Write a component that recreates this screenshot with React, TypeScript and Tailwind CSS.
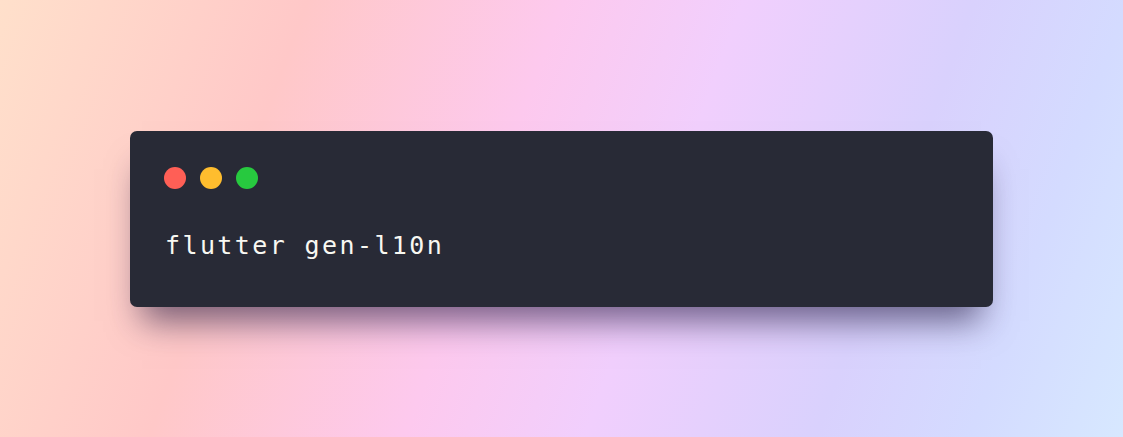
export default function App() {
  return (
    <div className="w-[1123px] h-[437px] flex items-center justify-center bg-[linear-gradient(110deg,#ffe0cb_0%,#ffc8c8_24%,#fdc9ee_44%,#f1cffd_58%,#d9d1fd_76%,#d4dbff_88%,#d7e8ff_100%)]">
      <div className="w-[863px] h-[176px] rounded-[7px] bg-[#282a36] shadow-[0_26px_32px_-12px_rgba(30,20,60,0.6)] px-[34px] pt-[36px]">
        <div className="flex gap-[14px]">
          <span className="w-[22px] h-[22px] rounded-full bg-[#ff5f56]" />
          <span className="w-[22px] h-[22px] rounded-full bg-[#ffbd2e]" />
          <span className="w-[22px] h-[22px] rounded-full bg-[#27c93f]" />
        </div>
        <div className="mt-[41px] pl-px font-['DejaVu_Sans_Mono',monospace] text-[25px] leading-[32px] tracking-[2.4px] text-[#f8f8f2]">
          flutter gen-l10n
        </div>
      </div>
    </div>
  );
}
